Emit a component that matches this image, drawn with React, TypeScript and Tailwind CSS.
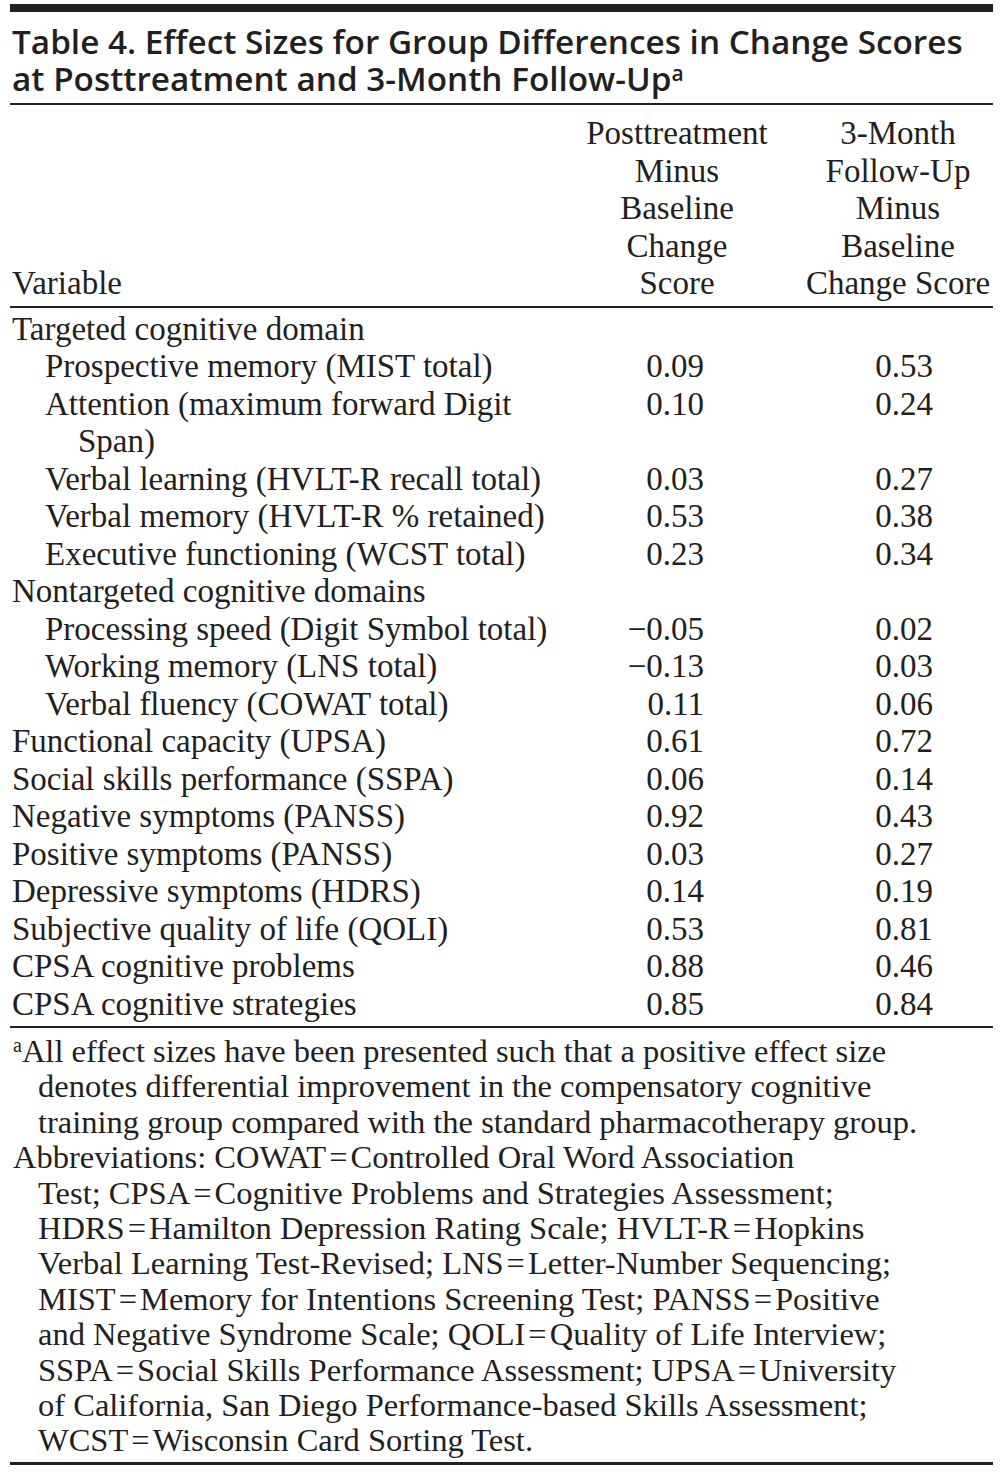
const rows: { label: string; level: number; a?: string; b?: string; wrap?: string }[] = [
  { label: "Targeted cognitive domain", level: 0 },
  { label: "Prospective memory (MIST total)", level: 1, a: "0.09", b: "0.53" },
  { label: "Attention (maximum forward Digit", wrap: "Span)", level: 1, a: "0.10", b: "0.24" },
  { label: "Verbal learning (HVLT-R recall total)", level: 1, a: "0.03", b: "0.27" },
  { label: "Verbal memory (HVLT-R % retained)", level: 1, a: "0.53", b: "0.38" },
  { label: "Executive functioning (WCST total)", level: 1, a: "0.23", b: "0.34" },
  { label: "Nontargeted cognitive domains", level: 0 },
  { label: "Processing speed (Digit Symbol total)", level: 1, a: "\u22120.05", b: "0.02" },
  { label: "Working memory (LNS total)", level: 1, a: "\u22120.13", b: "0.03" },
  { label: "Verbal fluency (COWAT total)", level: 1, a: "0.11", b: "0.06" },
  { label: "Functional capacity (UPSA)", level: 0, a: "0.61", b: "0.72" },
  { label: "Social skills performance (SSPA)", level: 0, a: "0.06", b: "0.14" },
  { label: "Negative symptoms (PANSS)", level: 0, a: "0.92", b: "0.43" },
  { label: "Positive symptoms (PANSS)", level: 0, a: "0.03", b: "0.27" },
  { label: "Depressive symptoms (HDRS)", level: 0, a: "0.14", b: "0.19" },
  { label: "Subjective quality of life (QOLI)", level: 0, a: "0.53", b: "0.81" },
  { label: "CPSA cognitive problems", level: 0, a: "0.88", b: "0.46" },
  { label: "CPSA cognitive strategies", level: 0, a: "0.85", b: "0.84" },
];

const notes = [
  "denotes differential improvement in the compensatory cognitive",
  "training group compared with the standard pharmacotherapy group.",
];

const abbrevs = [
  "Test; CPSA=Cognitive Problems and Strategies Assessment;",
  "HDRS=Hamilton Depression Rating Scale; HVLT-R=Hopkins",
  "Verbal Learning Test-Revised; LNS=Letter-Number Sequencing;",
  "MIST=Memory for Intentions Screening Test; PANSS=Positive",
  "and Negative Syndrome Scale; QOLI=Quality of Life Interview;",
  "SSPA=Social Skills Performance Assessment; UPSA=University",
  "of California, San Diego Performance-based Skills Assessment;",
  "WCST=Wisconsin Card Sorting Test.",
];

// puts a little room either side of each "="
function Eq({ text }: { text: string }) {
  const parts = text.split("=");
  return (
    <>
      {parts.map((p, i) => (
        <span key={i}>
          {i > 0 && <span className="mx-[3px]">=</span>}
          {p}
        </span>
      ))}
    </>
  );
}

export default function App() {
  return (
    <div className="min-h-[1472px] bg-white text-[#231f20] pt-[4px]">
      <div className="ml-[10px] w-[983px]">
        <div className="h-[8px] bg-[#231f20]" />

        <h1
          className="pl-[2px] pt-[11px] pb-[6px] text-[33.3px] leading-[37px] font-semibold whitespace-nowrap"
          style={{ fontFamily: '"Open Sans", "Noto Sans", sans-serif' }}
        >
          Table 4. Effect Sizes for Group Differences in Change Scores
          <br />
          at Posttreatment and 3-Month Follow-Up
          <sup className="text-[21px] font-semibold">a</sup>
        </h1>
        <div className="h-[2px] bg-[#231f20]" />

        <div style={{ fontFamily: '"Liberation Serif", "Times New Roman", serif' }}>
          <div className="grid grid-cols-[541px_252px_190px] pt-[10px] pb-[3px] text-[33px] leading-[37.5px]">
            <div className="pl-[2px] flex items-end">Variable</div>
            <div className="text-center">
              Posttreatment
              <br />
              Minus
              <br />
              Baseline
              <br />
              Change
              <br />
              Score
            </div>
            <div className="text-center whitespace-nowrap">
              3-Month
              <br />
              Follow-Up
              <br />
              Minus
              <br />
              Baseline
              <br />
              Change Score
            </div>
          </div>
          <div className="h-[2px] bg-[#231f20]" />

          <div className="pt-[3px] pb-[3px] text-[33px] leading-[37.5px]">
            {rows.map((r) => (
              <div key={r.label} className="grid grid-cols-[541px_252px_190px]">
                <div className={`whitespace-nowrap ${r.level === 1 ? "pl-[35px]" : "pl-[2px]"}`}>
                  {r.label}
                  {r.wrap && <div className="pl-[33px]">{r.wrap}</div>}
                </div>
                <div className="text-right pr-[99px]">{r.a}</div>
                <div className="text-right pr-[60px]">{r.b}</div>
              </div>
            ))}
          </div>
          <div className="h-[2px] bg-[#231f20]" />

          <div className="pt-[6px] pb-[3px] text-[32.5px] leading-[35.4px] whitespace-nowrap">
            <div className="pl-[3px]">
              <sup className="text-[20px]">a</sup>All effect sizes have been presented such that a positive effect size
            </div>
            {notes.map((n) => (
              <div key={n} className="pl-[28px]">
                {n}
              </div>
            ))}
            <div className="pl-[3px]">
              <Eq text="Abbreviations: COWAT=Controlled Oral Word Association" />
            </div>
            {abbrevs.map((n) => (
              <div key={n} className="pl-[28px]">
                <Eq text={n} />
              </div>
            ))}
          </div>
        </div>
        <div className="h-[3px] bg-[#231f20]" />
      </div>
    </div>
  );
}
